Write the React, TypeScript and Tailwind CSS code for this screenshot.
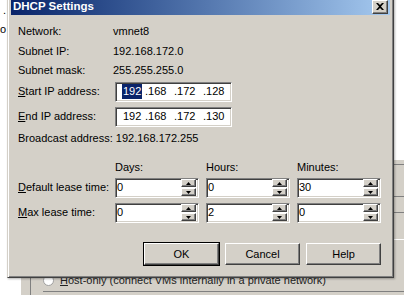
import React from "react";

const FONT = { fontFamily: '"Liberation Sans", Arial, sans-serif' };

// classic win32 3D borders
const sunken =
  "border border-t-[#808080] border-l-[#808080] border-b-white border-r-white shadow-[inset_1px_1px_0_#404040,inset_-1px_-1px_0_#d4d0c8]";
const raised =
  "border border-t-white border-l-white border-b-[#404040] border-r-[#404040] shadow-[inset_-1px_-1px_0_#808080]";

function Label({ children, u }: { children: string; u?: number }) {
  if (u === undefined) return <span>{children}</span>;
  return (
    <span>
      {children.slice(0, u)}
      <span className="underline underline-offset-1">{children[u]}</span>
      {children.slice(u + 1)}
    </span>
  );
}

function IpBox({ selected, parts }: { selected?: boolean; parts: string[] }) {
  return (
    <div className={`ml-[2px] w-[117px] h-[20px] bg-white grid grid-cols-[23px_29px_29px_29px] items-center pl-[6px] ${sunken}`}>
      <span className={selected ? "justify-self-start bg-[#0a246a] text-white px-[1px] leading-[15px]" : "justify-self-start px-[1px]"}>
        {parts[0]}
      </span>
      <span>.{parts[1]}</span>
      <span>.{parts[2]}</span>
      <span>.{parts[3]}</span>
    </div>
  );
}

function Arrow({ up }: { up?: boolean }) {
  return (
    <svg width="5" height="3" viewBox="0 0 5 3">
      {up ? <path d="M2.5 0 L5 3 L0 3 Z" fill="#000" /> : <path d="M0 0 L5 0 L2.5 3 Z" fill="#000" />}
    </svg>
  );
}

function Spin({ value }: { value: string }) {
  return (
    <div className={`w-[84px] h-[20px] bg-white flex items-center justify-between ${sunken}`}>
      <span className="pl-[1px]">{value}</span>
      <div className="flex flex-col gap-[1px] pr-[2px]">
        <div className={`w-[15px] h-[8px] bg-[#d4d0c8] flex items-center justify-center ${raised}`}>
          <Arrow up />
        </div>
        <div className={`w-[15px] h-[8px] bg-[#d4d0c8] flex items-center justify-center ${raised}`}>
          <Arrow />
        </div>
      </div>
    </div>
  );
}

function Btn({ children, def }: { children: string; def?: boolean }) {
  return (
    <div
      className={`w-[75px] h-[22px] bg-[#d4d0c8] flex items-center justify-center ${
        def ? "outline outline-1 outline-black" : ""
      } ${raised}`}
    >
      {children}
    </div>
  );
}

export default function App() {
  return (
    <div className="relative w-[404px] h-[295px] bg-white overflow-hidden text-[11px] text-black" style={FONT}>
      {/* background window behind the dialog */}
      <div className="absolute left-[3px] top-[5px] leading-none">.</div>
      <div className="absolute left-0 top-[24px] leading-none">o</div>
      <div className="absolute left-[393px] top-0 w-[11px] h-[295px] border-l border-[#808080] flex flex-col">
        <div className="h-[160px] bg-white" />
        <div className="flex-1 bg-[#d4d0c8] flex flex-col">
          <div className="h-[5px] border-b border-[#808080]" />
          <div className="h-[32px] border-b border-[#808080]" />
          <div className="h-[16px] border-b border-[#808080]" />
          <div className="h-[27px] border-b border-white" />
        </div>
      </div>
      <div className="absolute left-[20px] top-[270px] w-[384px] h-[25px] bg-[#d4d0c8] border-l border-white">
        <div className="ml-[9px] h-[21px] border-l border-[#808080] pl-[12px] flex items-center gap-[6px] text-[#222]">
          <span className="w-[11px] h-[11px] rounded-full bg-white border border-[#a0a0a0]" />
          <span>
            <span className="underline">H</span>ost-only (connect VMs internally in a private network)
          </span>
        </div>
        <div className="absolute left-[9px] top-[21px] h-[4px] border-l border-[#808080]" />
        <div className="absolute left-[22px] right-0 top-[21px] border-t border-[#808080]" />
      </div>

      {/* dialog */}
      <div className="absolute left-[7px] top-[-7px] w-[387px] h-[285px] bg-[#d4d0c8] border border-t-[#d4d0c8] border-l-[#d4d0c8] border-b-[#404040] border-r-[#404040] shadow-[inset_1px_1px_0_white,inset_-1px_-1px_0_#808080,1px_1px_2px_rgba(0,0,0,0.3)] p-[3px] flex flex-col">
        <div className="h-[18px] bg-gradient-to-r from-[#0a246a] to-[#a6caf0] flex items-center justify-between pl-[2px] pr-[2px] pt-[1px]">
          <span className="text-white font-bold text-[11.5px]">DHCP Settings</span>
          <div className={`w-[16px] h-[14px] bg-[#d4d0c8] flex items-center justify-center ${raised}`}>
            <svg width="8" height="7" viewBox="0 0 8 7">
              <path d="M0 0 L2 0 L4 2 L6 0 L8 0 L5 3.5 L8 7 L6 7 L4 5 L2 7 L0 7 L3 3.5 Z" fill="#000" />
            </svg>
          </div>
        </div>

        <div className="pl-[7px] pt-[6px] flex flex-col">
          <div className="grid grid-cols-[95px_auto] items-center">
            <div className="h-[20px] flex items-center">Network:</div>
            <div>vmnet8</div>
            <div className="h-[20px] flex items-center">Subnet IP:</div>
            <div>192.168.172.0</div>
            <div className="h-[18px] flex items-center">Subnet mask:</div>
            <div>255.255.255.0</div>
            <div className="h-[25px] flex items-center">
              <Label u={0}>Start IP address:</Label>
            </div>
            <IpBox selected parts={["192", "168", "172", "128"]} />
            <div className="h-[25px] flex items-center">
              <Label u={0}>End IP address:</Label>
            </div>
            <IpBox parts={["192", "168", "172", "130"]} />
          </div>
          <div className="h-[19px] flex items-center">Broadcast address: 192.168.172.255</div>

          <div className="mt-[11px] grid grid-cols-[97px_91px_91px_84px] items-center">
            <div />
            <div className="h-[16px]">Days:</div>
            <div className="h-[16px]">Hours:</div>
            <div className="h-[16px]">Minutes:</div>
            <div className="h-[25px] flex items-center">
              <Label u={0}>Default lease time:</Label>
            </div>
            <Spin value="0" />
            <Spin value="0" />
            <Spin value="30" />
            <div className="h-[25px] flex items-center">
              <Label u={0}>Max lease time:</Label>
            </div>
            <Spin value="0" />
            <Spin value="2" />
            <Spin value="0" />
          </div>

          <div className="mt-[18px] flex justify-end gap-[6px] pr-[9px]">
            <Btn def>OK</Btn>
            <Btn>Cancel</Btn>
            <Btn>Help</Btn>
          </div>
        </div>
      </div>
    </div>
  );
}
